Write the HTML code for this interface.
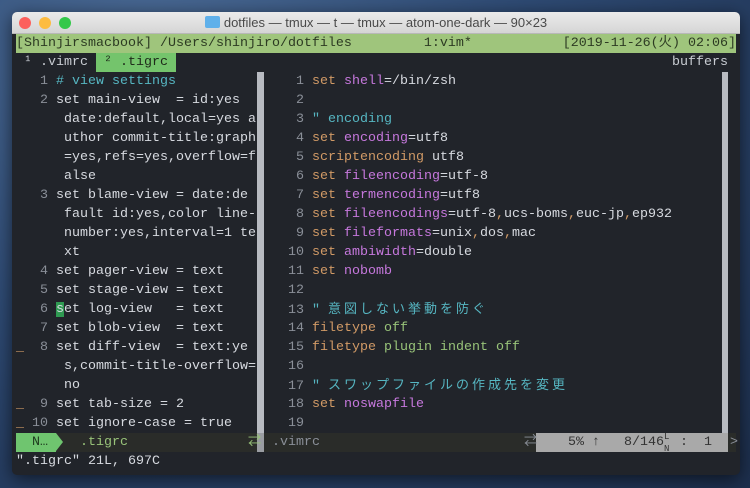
<!DOCTYPE html>
<html><head><meta charset="utf-8"><style>
*{margin:0;padding:0;box-sizing:border-box}
body{width:750px;height:488px;overflow:hidden;position:relative;
background:radial-gradient(ellipse at 20% 10%,#4a6a95 0%,#2e4a73 45%,#1d2f4d 100%);font-family:"Liberation Mono","Noto Sans CJK JP",monospace}
.win{position:absolute;left:12px;top:12px;width:728px;height:463px;background:#21242a;border-radius:5px;overflow:hidden;box-shadow:0 4px 18px rgba(0,0,0,.6)}
.tb{position:absolute;left:0;top:0;width:728px;height:22px;background:linear-gradient(#ebebeb,#d5d5d5);border-bottom:1px solid #b8b8b8;font-family:"Liberation Sans",sans-serif;font-size:13px;color:#4a4a4a;text-align:center;line-height:22px}
.dot{position:absolute;top:5px;width:12px;height:12px;border-radius:50%}
.r{position:absolute;left:4px;height:19px;line-height:19px;font-size:13.333px;white-space:pre;color:#d7dae0}
.R{left:260px}
.ln{color:#8a8f98}
.o{color:#d19a66}.p{color:#c678dd}.c{color:#56b6c2}.g{color:#98c379}
.j{font-size:13px;letter-spacing:3px}
.abs{position:absolute}
</style></head><body>
<div class="win">
<div class="tb"><div class="dot" style="left:7px;background:#fc605c"></div><div class="dot" style="left:27px;background:#fdbc40"></div><div class="dot" style="left:47px;background:#34c84a"></div>
<span style="display:inline-block;width:15px;height:12px;background:#5fb0ea;border-radius:2px;vertical-align:-1px;margin-right:4px"></span>dotfiles — tmux — t — tmux — atom-one-dark — 90×23</div>
<div class="abs" style="left:4px;top:22px;width:720px;height:19px;background:#9fc57c"></div>
<div class="r" style="top:22px;color:#2c3a22">[Shinjirsmacbook] /Users/shinjiro/dotfiles         1:vim*</div>
<div class="r" style="top:22px;left:auto;right:4px;color:#2c3a22">[2019-11-26(火) 02:06]</div>
<div class="abs" style="left:84px;top:41px;width:80px;height:19px;background:#74c46c"></div>
<div class="r" style="top:41px;color:#c8ccd2"> ¹ .vimrc  <span style="color:#1e2a1a">² .tigrc</span></div>
<div class="r" style="top:41px;left:auto;right:12px;color:#c8ccd2">buffers</div>
<div class="abs" style="left:245px;top:60px;width:7px;height:361px;background:#b8bbc1"></div>
<div class="abs" style="left:710px;top:60px;width:6px;height:361px;background:#b8bbc1"></div>
<div class="abs" style="left:4px;top:421px;width:720px;height:19px;background:#2a2c29"></div>
<div class="abs" style="left:4px;top:421px;width:40px;height:19px;background:#6fc56f"></div>
<div class="abs" style="left:44px;top:421px;width:0;height:0;border-top:9.5px solid transparent;border-bottom:9.5px solid transparent;border-left:7px solid #6fc56f"></div>
<div class="abs" style="left:245px;top:421px;width:7px;height:19px;background:#9a9da2"></div>
<div class="abs" style="left:524px;top:421px;width:192px;height:19px;background:#a9a9a9"></div>
<div class="r" style="top:421px;color:#1e3a1e">  N…</div>
<div class="r g" style="top:421px;left:68px">.tigrc</div>
<div class="r g" style="top:421px;left:236px">⇄</div>
<div class="r" style="top:421px;left:260px;color:#8a8f98">.vimrc</div>
<div class="r" style="top:421px;left:512px;color:#8a8f98">⇄</div>
<div class="r" style="top:421px;left:540px;color:#333">  5% ↑   8/146</div>
<div class="r" style="top:419px;left:652px;color:#333;font-size:9px;line-height:12px">L<br>N</div>
<div class="r" style="top:421px;left:660px;color:#333"> :  1</div>
<div class="r" style="top:421px;left:718px;color:#8a8f98">></div>
<div class="r" style="top:440px">".tigrc" 21L, 697C</div>

<div class="r" style="top:60px"><span class="ln">   1</span> <span class="c"># view settings</span></div>
<div class="r" style="top:79px"><span class="ln">   2</span> set main-view  = id:yes</div>
<div class="r" style="top:98px">      date:default,local=yes a</div>
<div class="r" style="top:117px">      uthor commit-title:graph</div>
<div class="r" style="top:136px">      =yes,refs=yes,overflow=f</div>
<div class="r" style="top:155px">      alse</div>
<div class="r" style="top:174px"><span class="ln">   3</span> set blame-view = date:de</div>
<div class="r" style="top:193px">      fault id:yes,color line-</div>
<div class="r" style="top:212px">      number:yes,interval=1 te</div>
<div class="r" style="top:231px">      xt</div>
<div class="r" style="top:250px"><span class="ln">   4</span> set pager-view = text</div>
<div class="r" style="top:269px"><span class="ln">   5</span> set stage-view = text</div>
<div class="r" style="top:288px"><span class="ln">   6</span> <span style="background:#2f9a52">s</span>et log-view   = text</div>
<div class="r" style="top:307px"><span class="ln">   7</span> set blob-view  = text</div>
<div class="r" style="top:326px"><span class="o">_</span><span class="ln">  8</span> set diff-view  = text:ye</div>
<div class="r" style="top:345px">      s,commit-title-overflow=</div>
<div class="r" style="top:364px">      no</div>
<div class="r" style="top:383px"><span class="o">_</span><span class="ln">  9</span> set tab-size = 2</div>
<div class="r" style="top:402px"><span class="o">_</span><span class="ln"> 10</span> set ignore-case = true</div>

<div class="r R" style="top:60px"><span class="ln">   1</span> <span class="o">set</span> <span class="p">shell</span>=/bin/zsh</div>
<div class="r R" style="top:79px"><span class="ln">   2</span></div>
<div class="r R" style="top:98px"><span class="ln">   3</span> <span class="c">" encoding</span></div>
<div class="r R" style="top:117px"><span class="ln">   4</span> <span class="o">set</span> <span class="p">encoding</span>=utf8</div>
<div class="r R" style="top:136px"><span class="ln">   5</span> <span class="o">scriptencoding</span> utf8</div>
<div class="r R" style="top:155px"><span class="ln">   6</span> <span class="o">set</span> <span class="p">fileencoding</span>=utf-8</div>
<div class="r R" style="top:174px"><span class="ln">   7</span> <span class="o">set</span> <span class="p">termencoding</span>=utf8</div>
<div class="r R" style="top:193px"><span class="ln">   8</span> <span class="o">set</span> <span class="p">fileencodings</span>=utf-8<span class="o">,</span>ucs-boms<span class="o">,</span>euc-jp<span class="o">,</span>ep932</div>
<div class="r R" style="top:212px"><span class="ln">   9</span> <span class="o">set</span> <span class="p">fileformats</span>=unix<span class="o">,</span>dos<span class="o">,</span>mac</div>
<div class="r R" style="top:231px"><span class="ln">  10</span> <span class="o">set</span> <span class="p">ambiwidth</span>=double</div>
<div class="r R" style="top:250px"><span class="ln">  11</span> <span class="o">set</span> <span class="p">nobomb</span></div>
<div class="r R" style="top:269px"><span class="ln">  12</span></div>
<div class="r R" style="top:288px"><span class="ln">  13</span> <span class="c">" <span class="j">意図しない挙動を防ぐ</span></span></div>
<div class="r R" style="top:307px"><span class="ln">  14</span> <span class="o">filetype</span> <span class="g">off</span></div>
<div class="r R" style="top:326px"><span class="ln">  15</span> <span class="o">filetype</span> <span class="g">plugin indent off</span></div>
<div class="r R" style="top:345px"><span class="ln">  16</span></div>
<div class="r R" style="top:364px"><span class="ln">  17</span> <span class="c">" <span class="j">スワップファイルの作成先を変更</span></span></div>
<div class="r R" style="top:383px"><span class="ln">  18</span> <span class="o">set</span> <span class="p">noswapfile</span></div>
<div class="r R" style="top:402px"><span class="ln">  19</span></div>
</div>
</body></html>
